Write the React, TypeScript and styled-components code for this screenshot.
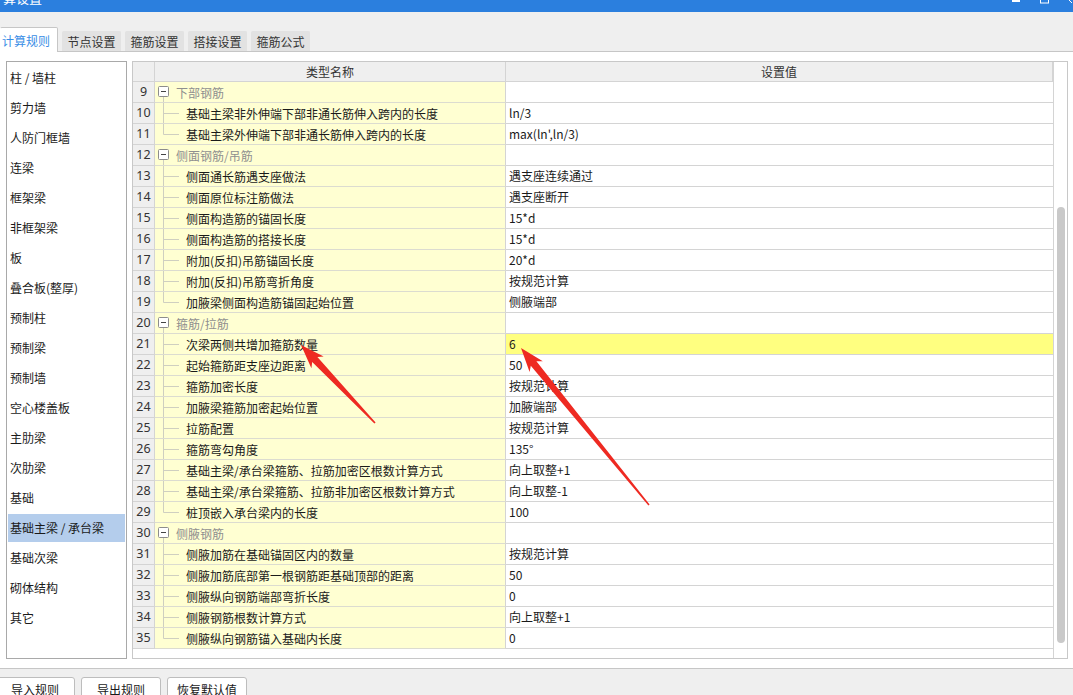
import React from "react";
import styled, { createGlobalStyle } from "styled-components";

const GlobalStyle = createGlobalStyle`
  html, body {
    margin: 0;
    padding: 0;
    background: #ffffff;
  }
  body {
    font-family: "Noto Sans CJK SC", "Noto Sans", sans-serif;
    font-size: 12px;
    color: #1e1e1e;
  }
`;

type Row = {
  n: number;
  name: string;
  value?: string;
  group?: boolean;
  hot?: boolean;
};

const rows: Row[] = [
  { n: 9, name: "下部钢筋", group: true },
  { n: 10, name: "基础主梁非外伸端下部非通长筋伸入跨内的长度", value: "ln/3" },
  { n: 11, name: "基础主梁外伸端下部非通长筋伸入跨内的长度", value: "max(ln',ln/3)" },
  { n: 12, name: "侧面钢筋/吊筋", group: true },
  { n: 13, name: "侧面通长筋遇支座做法", value: "遇支座连续通过" },
  { n: 14, name: "侧面原位标注筋做法", value: "遇支座断开" },
  { n: 15, name: "侧面构造筋的锚固长度", value: "15*d" },
  { n: 16, name: "侧面构造筋的搭接长度", value: "15*d" },
  { n: 17, name: "附加(反扣)吊筋锚固长度", value: "20*d" },
  { n: 18, name: "附加(反扣)吊筋弯折角度", value: "按规范计算" },
  { n: 19, name: "加腋梁侧面构造筋锚固起始位置", value: "侧腋端部" },
  { n: 20, name: "箍筋/拉筋", group: true },
  { n: 21, name: "次梁两侧共增加箍筋数量", value: "6", hot: true },
  { n: 22, name: "起始箍筋距支座边距离", value: "50" },
  { n: 23, name: "箍筋加密长度", value: "按规范计算" },
  { n: 24, name: "加腋梁箍筋加密起始位置", value: "加腋端部" },
  { n: 25, name: "拉筋配置", value: "按规范计算" },
  { n: 26, name: "箍筋弯勾角度", value: "135°" },
  { n: 27, name: "基础主梁/承台梁箍筋、拉筋加密区根数计算方式", value: "向上取整+1" },
  { n: 28, name: "基础主梁/承台梁箍筋、拉筋非加密区根数计算方式", value: "向上取整-1" },
  { n: 29, name: "桩顶嵌入承台梁内的长度", value: "100" },
  { n: 30, name: "侧腋钢筋", group: true },
  { n: 31, name: "侧腋加筋在基础锚固区内的数量", value: "按规范计算" },
  { n: 32, name: "侧腋加筋底部第一根钢筋距基础顶部的距离", value: "50" },
  { n: 33, name: "侧腋纵向钢筋端部弯折长度", value: "0" },
  { n: 34, name: "侧腋钢筋根数计算方式", value: "向上取整+1" },
  { n: 35, name: "侧腋纵向钢筋锚入基础内长度", value: "0" },
];

const categories = [
  "柱 / 墙柱",
  "剪力墙",
  "人防门框墙",
  "连梁",
  "框架梁",
  "非框架梁",
  "板",
  "叠合板(整厚)",
  "预制柱",
  "预制梁",
  "预制墙",
  "空心楼盖板",
  "主肋梁",
  "次肋梁",
  "基础",
  "基础主梁 / 承台梁",
  "基础次梁",
  "砌体结构",
  "其它",
];

const tabs = ["计算规则", "节点设置", "箍筋设置", "搭接设置", "箍筋公式"];

type Pt = [number, number];

// tapered red annotation arrow, tail -> tip
function arrowPoints(tail: Pt, tip: Pt) {
  const dx = tip[0] - tail[0];
  const dy = tip[1] - tail[1];
  const len = Math.hypot(dx, dy);
  const u: Pt = [dx / len, dy / len];
  const nrm: Pt = [-u[1], u[0]];
  const at = (back: number, side: number): Pt => [
    tip[0] - u[0] * back + nrm[0] * side,
    tip[1] - u[1] * back + nrm[1] * side,
  ];
  const pts: Pt[] = [
    [tail[0] + nrm[0] * 0.8, tail[1] + nrm[1] * 0.8],
    at(20, 3.6),
    at(24, 8.5),
    tip,
    at(24, -8.5),
    at(20, -3.6),
    [tail[0] - nrm[0] * 0.8, tail[1] - nrm[1] * 0.8],
  ];
  return pts.map((p) => `${p[0].toFixed(1)},${p[1].toFixed(1)}`).join(" ");
}

export default function App() {
  return (
    <Window>
      <GlobalStyle />
      <TitleBar>
        <TitleText>计算设置</TitleText>
        <WindowButtons>
          <svg width="9" height="12" viewBox="0 0 9 12">
            <rect x="0" y="0" width="8" height="2" fill="#fff" />
          </svg>
          <svg width="10" height="12" viewBox="0 0 10 12">
            <rect x="0.5" y="-6" width="8" height="9" fill="none" stroke="#fff" strokeWidth="1" />
          </svg>
          <svg width="4" height="12" viewBox="0 0 4 12">
            <path d="M0 0 L3 3" stroke="#fff" strokeWidth="1" />
          </svg>
        </WindowButtons>
      </TitleBar>

      <TabStrip>
        {tabs.map((t, i) => (
          <Tab key={t} $active={i === 0}>
            {t}
          </Tab>
        ))}
      </TabStrip>

      <Body>
        <Sidebar>
          {categories.map((c) => (
            <SideItem key={c} $selected={c === "基础主梁 / 承台梁"}>
              {c}
            </SideItem>
          ))}
        </Sidebar>

        <GridBox>
          <Table>
            <HeaderRow>
              <HeadCell />
              <HeadCell>类型名称</HeadCell>
              <HeadCell>设置值</HeadCell>
            </HeaderRow>
            {rows.map((r, i) => {
              const next = rows[i + 1];
              const last = !next || !!next.group;
              return (
                <DataRow key={r.n}>
                  <NumCell>{r.n}</NumCell>
                  <NameCell>
                    {r.group ? (
                      <>
                        <svg width="11" height="20" viewBox="0 0 11 20">
                          <rect x="0.5" y="4.5" width="10" height="10" rx="1" fill="#fff" stroke="#8c8c8c" />
                          <line x1="3" y1="9.5" x2="8" y2="9.5" stroke="#444" />
                          <line x1="5.5" y1="15" x2="5.5" y2="21" stroke="#cfcfc0" />
                        </svg>
                        <GroupText>{r.name}</GroupText>
                      </>
                    ) : (
                      <>
                        <svg width="28" height="20" viewBox="0 0 28 20">
                          <line x1="5.5" y1="-1" x2="5.5" y2={last ? 10.5 : 21} stroke="#cfcfc0" />
                          <line x1="5.5" y1="10.5" x2="21" y2="10.5" stroke="#cfcfc0" />
                        </svg>
                        <span>{r.name}</span>
                      </>
                    )}
                  </NameCell>
                  <ValueCell $hot={r.hot}>{r.value ?? ""}</ValueCell>
                </DataRow>
              );
            })}
          </Table>
          <ScrollTrack>
            <ScrollThumb />
          </ScrollTrack>
        </GridBox>
      </Body>

      <Footer>
        <FooterButton>导入规则</FooterButton>
        <FooterButton>导出规则</FooterButton>
        <FooterButton>恢复默认值</FooterButton>
      </Footer>

      <Annotations width="1073" height="695" viewBox="0 0 1073 695">
        <polygon points={arrowPoints([375, 423], [301, 345])} fill="#ee2a22" />
        <polygon points={arrowPoints([649, 505], [521, 348])} fill="#ee2a22" />
      </Annotations>
    </Window>
  );
}

const Window = styled.div`
  position: relative;
  width: 1073px;
  height: 695px;
  display: flex;
  flex-direction: column;
  overflow: hidden;
  background: #ffffff;
`;

const TitleBar = styled.div`
  height: 12px;
  flex: none;
  display: flex;
  justify-content: space-between;
  background: #2b7fde;
  overflow: hidden;
`;

const TitleText = styled.div`
  margin: -11px 0 0 -10px;
  color: #ffffff;
  font-size: 13px;
  line-height: 18px;
`;

const WindowButtons = styled.div`
  display: flex;
  align-items: flex-start;
  gap: 19px;
  padding-right: 0;
  svg {
    display: block;
  }
  svg:first-child {
    margin-right: 0;
  }
`;

const TabStrip = styled.div`
  height: 39px;
  flex: none;
  display: flex;
  align-items: flex-end;
  gap: 4px;
  background: #efefef;
  border-bottom: 1px solid #c6c6c6;
`;

const Tab = styled.div<{ $active?: boolean }>`
  box-sizing: border-box;
  width: ${(p) => (p.$active ? "58px" : "59px")};
  height: ${(p) => (p.$active ? "25px" : "20px")};
  margin-bottom: ${(p) => (p.$active ? "-1px" : "0")};
  display: flex;
  align-items: center;
  justify-content: center;
  padding-right: ${(p) => (p.$active ? "6px" : "0")};
  border: 1px solid ${(p) => (p.$active ? "#c6c6c6" : "#e2e2e2")};
  border-left-color: ${(p) => (p.$active ? "transparent" : "#e2e2e2")};
  border-bottom: none;
  border-radius: 2px 2px 0 0;
  background: ${(p) => (p.$active ? "#ffffff" : "#e2e2e2")};
  color: ${(p) => (p.$active ? "#3a8ee6" : "#333333")};
  font-size: 12px;
`;

const Body = styled.div`
  flex: 1;
  display: flex;
  align-items: flex-start;
  gap: 5px;
  padding: 9px 5px 0 6px;
  background: #ffffff;
`;

const Sidebar = styled.div`
  box-sizing: border-box;
  width: 121px;
  height: 598px;
  flex: none;
  display: flex;
  flex-direction: column;
  gap: 2px;
  padding: 2px 1px;
  border: 1px solid #a9a9a9;
`;

const SideItem = styled.div<{ $selected?: boolean }>`
  height: 28px;
  line-height: 28px;
  padding-left: 2px;
  font-size: 12px;
  color: #1a1a1a;
  white-space: nowrap;
  background: ${(p) => (p.$selected ? "#b4cdec" : "transparent")};
`;

const GridBox = styled.div`
  box-sizing: border-box;
  flex: 1;
  height: 598px;
  display: flex;
  border: 1px solid #c8c8c8;
`;

const Table = styled.div`
  flex: 1;
  display: grid;
  grid-template-columns: 22px 351px 1fr;
  grid-auto-rows: min-content;
  align-content: start;
`;

const HeaderRow = styled.div`
  display: contents;
`;

const HeadCell = styled.div`
  height: 19px;
  line-height: 19px;
  text-align: center;
  background: #efefef;
  color: #333333;
  font-size: 12px;
  border-right: 1px solid #d4d4d4;
  border-bottom: 1px solid #d4d4d4;
`;

const DataRow = styled.div`
  display: contents;
`;

const NumCell = styled.div`
  height: 20px;
  line-height: 20px;
  text-align: center;
  background: #efefef;
  color: #333333;
  font-family: "Noto Sans", "DejaVu Sans", sans-serif;
  font-size: 12.5px;
  border-right: 1px solid #d4d4d4;
  border-bottom: 1px solid #d4d4d4;
`;

const NameCell = styled.div`
  height: 20px;
  display: flex;
  align-items: center;
  padding-left: 3px;
  background: #ffffd2;
  border-right: 1px solid #d4d4d4;
  border-bottom: 1px solid #dcdcd0;
  font-size: 12px;
  color: #1a1a1a;
  white-space: nowrap;
  overflow: hidden;
  svg {
    display: block;
    flex: none;
  }
`;

const GroupText = styled.span`
  margin-left: 7px;
  color: #8f8f8f;
`;

const ValueCell = styled.div<{ $hot?: boolean }>`
  height: 20px;
  line-height: 20px;
  padding-left: 3px;
  background: ${(p) => (p.$hot ? "#ffff80" : "#ffffff")};
  border-bottom: 1px solid #d4d4d4;
  font-size: 12px;
  color: #1a1a1a;
  white-space: nowrap;
`;

const ScrollTrack = styled.div`
  width: 13px;
  flex: none;
  border-left: 1px solid #d4d4d4;
  background: #ffffff;
  display: flex;
  justify-content: center;
`;

const ScrollThumb = styled.div`
  width: 8px;
  height: 436px;
  margin-top: 145px;
  border-radius: 4px;
  background: #c9c9c9;
`;

const Footer = styled.div`
  height: 27px;
  flex: none;
  display: flex;
  gap: 6px;
  padding-top: 8px;
  box-sizing: border-box;
  background: #efefef;
  border-top: 1px solid #c6c6c6;
  overflow: hidden;
`;

const FooterButton = styled.div`
  box-sizing: border-box;
  width: 80px;
  height: 26px;
  flex: none;
  display: flex;
  align-items: center;
  justify-content: center;
  padding-bottom: 2px;
  border: 1px solid #bdbdbd;
  border-radius: 3px;
  background: #ffffff;
  font-size: 12px;
  color: #1a1a1a;
  &:first-child {
    margin-left: -5px;
  }
`;

const Annotations = styled.svg`
  position: absolute;
  left: 0;
  top: 0;
  pointer-events: none;
`;
